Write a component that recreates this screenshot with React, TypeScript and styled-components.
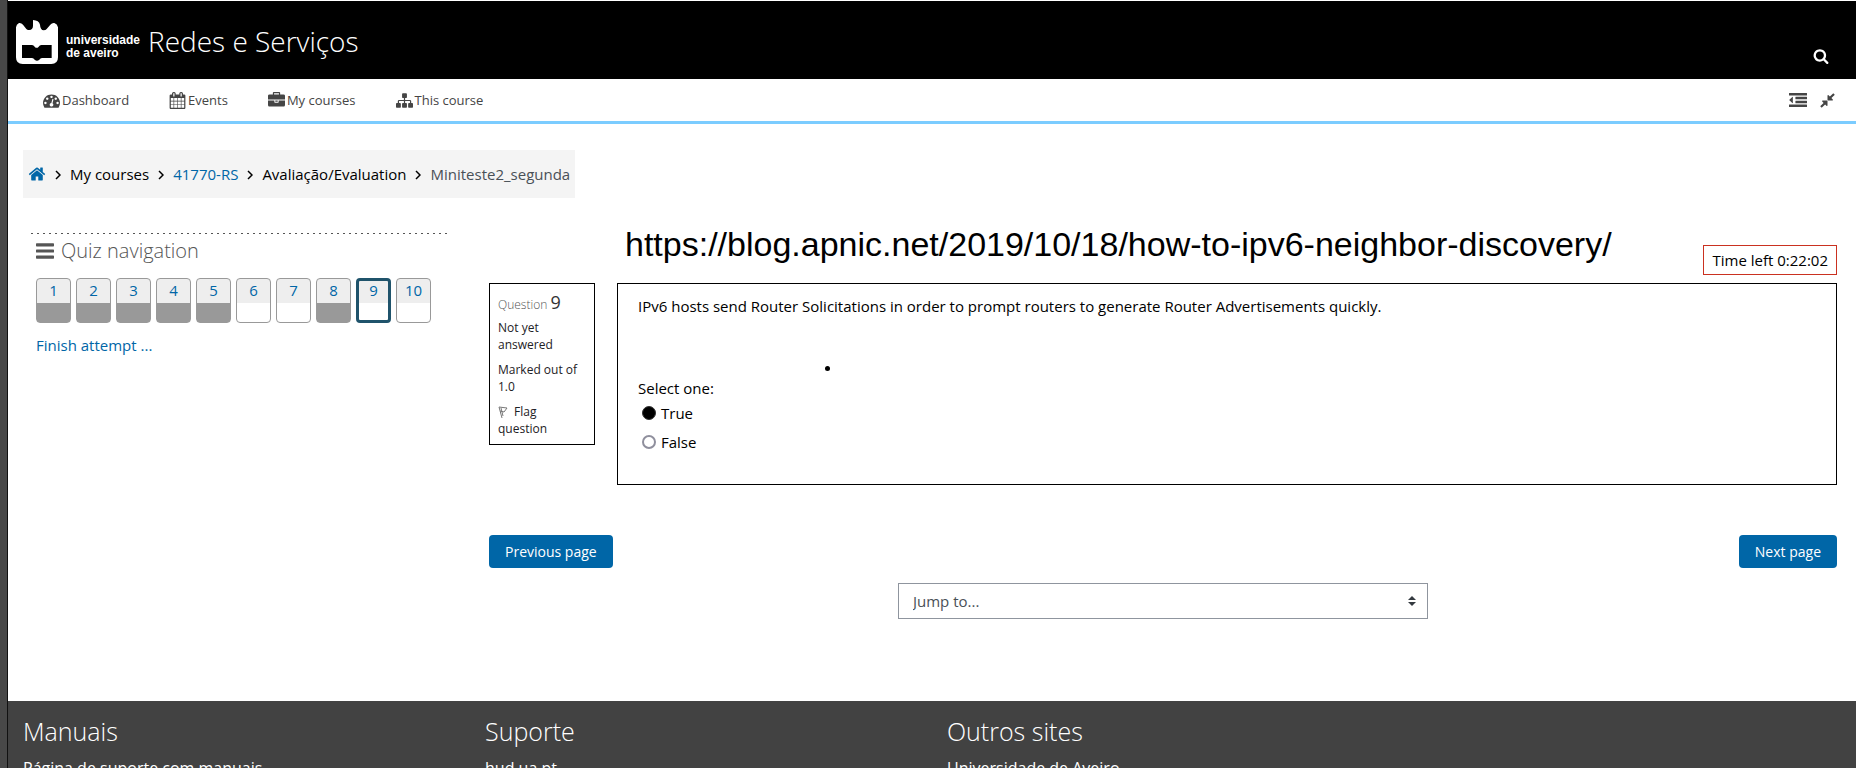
import React, { useState } from "react";
import styled, { createGlobalStyle } from "styled-components";

const GlobalStyle = createGlobalStyle`
  *, *::before, *::after { box-sizing: border-box; }
  html { scrollbar-width: none; }
  body {
    margin: 0;
    background: #fff;
    color: #000;
    font-family: "Open Sans", "Noto Sans", sans-serif;
    font-size: 15px;
    line-height: 22px;
  }
  a { color: #0066a7; text-decoration: none; }
`;

const ICONS = {
  dashboard:
    "M384 1152q0-53-37.5-90.5t-90.5-37.5-90.5 37.5-37.5 90.5 37.5 90.5 90.5 37.5 90.5-37.5 37.5-90.5zm192-448q0-53-37.5-90.5t-90.5-37.5-90.5 37.5-37.5 90.5 37.5 90.5 90.5 37.5 90.5-37.5 37.5-90.5zm428 481l101-382q6-26-7.5-48.5t-38.5-29.5-48 6.5-30 39.5l-101 382q-60 5-107 43.5t-63 98.5q-20 77 20 146t117 89 146-20 89-117q16-60-6-117t-72-91zm660-33q0-53-37.5-90.5t-90.5-37.5-90.5 37.5-37.5 90.5 37.5 90.5 90.5 37.5 90.5-37.5 37.5-90.5zm-640-640q0-53-37.5-90.5t-90.5-37.5-90.5 37.5-37.5 90.5 37.5 90.5 90.5 37.5 90.5-37.5 37.5-90.5zm448 192q0-53-37.5-90.5t-90.5-37.5-90.5 37.5-37.5 90.5 37.5 90.5 90.5 37.5 90.5-37.5 37.5-90.5zm320 448q0 261-141 483-19 29-54 29h-1402q-35 0-54-29-141-221-141-483 0-182 71-348t191-286 286-191 348-71 348 71 286 191 191 286 71 348z",
  calendar:
    "M192 1664h288v-288h-288v288zm352 0h320v-288h-320v288zm-352-352h288v-320h-288v320zm352 0h320v-320h-320v320zm-352-384h288v-288h-288v288zm736 736h320v-288h-320v288zm-384-736h320v-288h-320v288zm768 736h288v-288h-288v288zm-384-352h320v-320h-320v320zm-352-864v-288q0-13-9.5-22.5t-22.5-9.5h-64q-13 0-22.5 9.5t-9.5 22.5v288q0 13 9.5 22.5t22.5 9.5h64q13 0 22.5-9.5t9.5-22.5zm736 864h288v-320h-288v320zm-384-384h320v-288h-320v288zm384 0h288v-288h-288v288zm32-480v-288q0-13-9.5-22.5t-22.5-9.5h-64q-13 0-22.5 9.5t-9.5 22.5v288q0 13 9.5 22.5t22.5 9.5h64q13 0 22.5-9.5t9.5-22.5zm384-64v1280q0 52-38 90t-90 38h-1408q-52 0-90-38t-38-90v-1280q0-52 38-90t90-38h128v-96q0-66 47-113t113-47h64q66 0 113 47t47 113v96h384v-96q0-66 47-113t113-47h64q66 0 113 47t47 113v96h128q52 0 90 38t38 90z",
  briefcase:
    "M640 256h512v-128h-512v128zm1152 640v480q0 66-47 113t-113 47h-1472q-66 0-113-47t-47-113v-480h672v160q0 26 19 45t45 19h320q26 0 45-19t19-45v-160h672zm-768 0v128h-256v-128h256zm768-480v384h-1792v-384q0-66 47-113t113-47h352v-160q0-40 28-68t68-28h576q40 0 68 28t28 68v160h352q66 0 113 47t47 113z",
  sitemap:
    "M1792 1248v320q0 40-28 68t-68 28h-320q-40 0-68-28t-28-68v-320q0-40 28-68t68-28h96v-192h-512v192h96q40 0 68 28t28 68v320q0 40-28 68t-68 28h-320q-40 0-68-28t-28-68v-320q0-40 28-68t68-28h96v-192h-512v192h96q40 0 68 28t28 68v320q0 40-28 68t-68 28h-320q-40 0-68-28t-28-68v-320q0-40 28-68t68-28h96v-192q0-52 38-90t90-38h512v-192h-96q-40 0-68-28t-28-68v-320q0-40 28-68t68-28h320q40 0 68 28t28 68v320q0 40-28 68t-68 28h-96v192h512q52 0 90 38t38 90v192h96q40 0 68 28t28 68z",
  home:
    "M1472 992v480q0 26-19 45t-45 19h-384v-384h-256v384h-384q-26 0-45-19t-19-45v-480q0-1 .5-3t.5-3l575-474 575 474q1 2 1 6zm223-69l-62 74q-8 9-21 11h-3q-13 0-21-7l-692-577-692 577q-12 8-24 7-13-2-21-11l-62-74q-8-10-7-23.5t11-21.5l719-599q32-26 76-26t76 26l244 204v-195q0-14 9-23t23-9h192q14 0 23 9t9 23v408l219 182q10 8 11 21.5t-7 23.5z",
  search:
    "M1216 832q0-185-131.5-316.5t-316.5-131.5-316.5 131.5-131.5 316.5 131.5 316.5 316.5 131.5 316.5-131.5 131.5-316.5zm512 832q0 52-38 90t-90 38q-54 0-90-38l-343-342q-179 124-399 124-143 0-273.5-55.5t-225-150-150-225-55.5-273.5 55.5-273.5 150-225 225-150 273.5-55.5 273.5 55.5 225 150 150 225 55.5 273.5q0 220-124 399l343 343q37 37 37 90z",
  outdent:
    "M384 608v576q0 13-9.5 22.5t-22.5 9.5q-14 0-23-9l-288-288q-9-9-9-23t9-23l288-288q9-9 23-9 13 0 22.5 9.5t9.5 22.5zM32 1344h1728q32 0 32 32v192q0 32-32 32H32q-32 0-32-32v-192q0-32 32-32zM672 960h1088q32 0 32 32v192q0 32-32 32H672q-32 0-32-32V992q0-32 32-32zM672 576h1088q32 0 32 32v192q0 32-32 32H672q-32 0-32-32V608q0-32 32-32zM32 192h1728q32 0 32 32v192q0 32-32 32H32q-32 0-32-32V224q0-32 32-32z",
  compress:
    "M896 960v448q0 26-19 45t-45 19-45-19l-144-144-332 332q-10 10-23 10t-23-10l-114-114q-10-10-10-23t10-23l332-332-144-144q-19-19-19-45t19-45 45-19h448q26 0 45 19t19 45zm755-672q0 13-10 23l-332 332 144 144q19 19 19 45t-19 45-45 19h-448q-26 0-45-19t-19-45v-448q0-26 19-45t45-19 45 19l144 144 332-332q10-10 23-10t23 10l114 114q10 10 10 23z",
  menu:
    "M64 128h1664q64 0 64 64v192q0 64-64 64H64q-64 0-64-64V192q0-64 64-64zM64 736h1664q64 0 64 64v192q0 64-64 64H64q-64 0-64-64V800q0-64 64-64zM64 1344h1664q64 0 64 64v192q0 64-64 64H64q-64 0-64-64v-192q0-64 64-64z",
};

type IconName = keyof typeof ICONS;

const IconSvg = styled.svg`
  display: block;
  flex: none;
  fill: currentColor;
`;

const Icon = ({ name, size }: { name: IconName; size: number }) => (
  <IconSvg viewBox="0 0 1792 1792" width={size} height={size} aria-hidden="true">
    <path d={ICONS[name]} />
  </IconSvg>
);

const Shell = styled.div`
  border-left: 7px solid #484848;
`;

const Page = styled.div`
  border-left: 1px solid #111;
`;

const Header = styled.header`
  display: flex;
  align-items: flex-start;
  height: 79px;
  padding: 19px 27px 0 8px;
  border-top: 1px solid #fff;
  background: #000;
  color: #fff;
`;

const Brand = styled.a`
  display: flex;
  color: #fff;
`;

const BrandName = styled.span`
  padding: 14px 0 0 8px;
  font: bold 12px/13px "Liberation Sans", Arial, sans-serif;
`;

const CourseTitle = styled.h1`
  flex: 1;
  margin: 1px 0 0 8px;
  font-size: 28px;
  line-height: 40px;
  font-weight: 300;
`;

const IconButton = styled.button`
  display: flex;
  padding: 0;
  border: 0;
  background: none;
  color: inherit;
  cursor: pointer;
`;

const SearchButton = styled(IconButton)`
  margin-top: 28px;
`;

const NavBar = styled.nav`
  display: flex;
  align-items: center;
  justify-content: space-between;
  height: 45px;
  padding: 0 20px 0 35px;
  border-bottom: 3px solid #7bccff;
  color: #454545;
`;

const NavLinks = styled.div`
  display: flex;
  gap: 40px;
`;

const NavLink = styled.a`
  display: flex;
  align-items: center;
  gap: 2px;
  color: #454545;
  font-size: 13px;
`;

const NavTools = styled.div`
  display: flex;
  align-items: center;
  gap: 12px;
`;

const Breadcrumb = styled.ol`
  display: flex;
  align-items: center;
  width: fit-content;
  height: 48px;
  margin: 26px 15px 0;
  padding: 0 5px;
  background: #f4f4f4;
  list-style: none;
`;

const Crumb = styled.li<{ $muted?: boolean }>`
  display: flex;
  align-items: center;
  color: ${(p) => (p.$muted ? "#495057" : "#000")};
`;

const Chevron = styled.svg`
  width: 6px;
  height: 10px;
  margin: 1px 9px 0;
  fill: none;
  stroke: #000;
  stroke-width: 1.5;
`;

const Columns = styled.div`
  display: flex;
  padding: 35px 19px 0 23px;
`;

const Sidebar = styled.aside`
  flex: none;
  width: 416px;
  padding: 0 5px;
`;

const DottedRule = styled.div`
  height: 1px;
  margin: 0 -5px;
  background: repeating-linear-gradient(90deg, #555 0 2px, transparent 2px 6px);
`;

const SidebarTitle = styled.h2`
  display: flex;
  align-items: center;
  gap: 7px;
  margin: 4px 0 0;
  color: #555;
  font-size: 20px;
  line-height: 26px;
  font-weight: 300;
`;

const QuestionList = styled.div`
  display: flex;
  gap: 5px;
  margin-top: 14px;
`;

const QuestionLink = styled.a<{ $answered: boolean; $current: boolean }>`
  width: 35px;
  height: 45px;
  border: ${(p) => (p.$current ? "3px solid #1f536b" : "1px solid #999")};
  border-radius: 4px;
  overflow: hidden;
  background: linear-gradient(
    #eee ${(p) => (p.$current ? "22px" : "24px")},
    ${(p) => (p.$answered ? "#999" : "#fff")} 0
  );
  line-height: ${(p) => (p.$current ? "18px" : "22px")};
  text-align: center;
`;

const FinishLink = styled.a`
  display: block;
  margin-top: 11px;
`;

const Main = styled.main`
  flex: 1;
  min-width: 0;
  margin-left: 42px;
`;

const TopRow = styled.div`
  display: flex;
  align-items: flex-start;
  justify-content: space-between;
  height: 50px;
  padding-left: 136px;
`;

const Address = styled.div`
  font: 34px/38px "Liberation Sans", Helvetica, sans-serif;
  margin-top: -8px;
  white-space: nowrap;
`;

const Timer = styled.div`
  margin-top: 12px;
  padding: 3px 8px;
  border: 1px solid #ca3120;
  line-height: 22px;
`;

const QuestionRow = styled.div`
  display: flex;
  align-items: flex-start;
  gap: 22px;
`;

const Info = styled.section`
  flex: none;
  width: 106px;
  padding: 7px 8px;
  border: 1px solid #000;
  color: #1d2125;
  font-size: 12px;
  line-height: 17px;
`;

const QuestionNumber = styled.h3`
  margin: 0 0 3px;
  color: #555;
  font-size: 12px;
  line-height: 22px;
  font-weight: 300;
`;

const Digit = styled.span`
  color: #333;
  font-size: 18px;
  font-weight: 400;
`;

const InfoLine = styled.p`
  margin: 0 0 8px;
`;

const FlagButton = styled.button`
  padding: 0;
  border: 0;
  background: none;
  color: inherit;
  font: inherit;
  text-align: left;
`;

const FlagSvg = styled.svg`
  width: 10px;
  height: 12px;
  margin-right: 6px;
  vertical-align: -2px;
  fill: none;
  stroke: #777;
`;

const Content = styled.section`
  position: relative;
  flex: 1;
  height: 202px;
  padding: 11px 20px;
  border: 1px solid #000;
`;

const Prompt = styled.p`
  margin: 0;
`;

const PenDot = styled.span`
  position: absolute;
  left: 207px;
  top: 82px;
  width: 5px;
  height: 5px;
  border-radius: 50%;
  background: #000;
`;

const Answers = styled.fieldset`
  display: flex;
  flex-direction: column;
  margin: 60px 0 0;
  padding: 0;
  border: 0;
`;

const Legend = styled.legend`
  padding: 0;
`;

const Option = styled.label`
  display: flex;
  align-items: center;
  gap: 5px;
  height: 22px;
  margin: 3px 0 4px 4px;
`;

const Radio = styled.input`
  appearance: none;
  width: 14px;
  height: 14px;
  margin: 0;
  border: 2px solid #8f8f9d;
  border-radius: 50%;
  background: #fff;

  &:checked {
    border: 1px solid #333;
    background: #000;
  }
`;

const Pager = styled.div`
  display: flex;
  justify-content: space-between;
  margin-top: 50px;
`;

const PageButton = styled.button`
  height: 33px;
  padding: 0 16px;
  border: 0;
  border-radius: 4px;
  background: #0066a7;
  color: #fff;
  font: 14px/20px "Open Sans", sans-serif;
`;

const JumpSelect = styled.select`
  display: block;
  appearance: none;
  width: 530px;
  max-width: 100%;
  height: 36px;
  margin: 15px auto 0;
  padding: 0 14px;
  border: 1px solid #8f959e;
  border-radius: 0;
  background: url("data:image/svg+xml,%3Csvg xmlns='http://www.w3.org/2000/svg' viewBox='0 0 4 5'%3E%3Cpath fill='%23343a40' d='M2 0L0 2h4zm0 5L0 3h4z'/%3E%3C/svg%3E")
    no-repeat right 11px center / 8px 10px;
  color: #495057;
  font: 15px/22px "Open Sans", sans-serif;
`;

const Footer = styled.footer`
  display: grid;
  grid-template-columns: repeat(4, 1fr);
  margin-top: 82px;
  padding: 12px 0 16px;
  background: #424242;
  color: #fff;
`;

const FooterColumn = styled.section`
  padding: 0 15px;
`;

const FooterTitle = styled.h2`
  margin: 0 0 8px;
  font-size: 25px;
  line-height: 36px;
  font-weight: 300;
`;

const FooterLink = styled.a`
  color: #fff;
  font-size: 16px;
`;

const NAV: { icon: IconName; label: string }[] = [
  { icon: "dashboard", label: "Dashboard" },
  { icon: "calendar", label: "Events" },
  { icon: "briefcase", label: "My courses" },
  { icon: "sitemap", label: "This course" },
];

const ANSWERED = [1, 2, 3, 4, 5, 8];

const FOOTER = [
  { title: "Manuais", link: "Página de suporte com manuais" },
  { title: "Suporte", link: "hud.ua.pt" },
  { title: "Outros sites", link: "Universidade de Aveiro" },
];

const Separator = () => (
  <Chevron viewBox="0 0 6 10" aria-hidden="true">
    <path d="M1 1l4 4-4 4" />
  </Chevron>
);

const Logo = () => (
  <svg width="42" height="44" viewBox="0 0 126 132" aria-hidden="true">
    <path
      fill="#fff"
      d="M0 22Q1 13 9 9Q16 8 21 14L31 27Q34 31 40 30Q51 29 51 17V0Q69 1 72 14Q73 30 83 31Q89 31 92 27L103 14Q108 8 115 9Q124 12 126 22V112Q126 132 106 132H20Q0 132 0 112Z"
    />
    <path d="M18 75H48Q53 75 56 80Q62 87 68 80Q71 75 76 75H107V114H78Q73 114 70 119Q63 125 56 119Q53 114 48 114H18Z" />
  </svg>
);

export default function App() {
  const [answer, setAnswer] = useState("True");

  return (
    <Shell>
      <GlobalStyle />
      <Page>
        <Header>
          <Brand href="#" aria-label="universidade de aveiro">
            <Logo />
            <BrandName>
              universidade
              <br />
              de aveiro
            </BrandName>
          </Brand>
          <CourseTitle>Redes e Serviços</CourseTitle>
          <SearchButton aria-label="Search">
            <Icon name="search" size={16} />
          </SearchButton>
        </Header>
        <NavBar>
          <NavLinks>
            {NAV.map((item) => (
              <NavLink href="#" key={item.label}>
                <Icon name={item.icon} size={17} />
                {item.label}
              </NavLink>
            ))}
          </NavLinks>
          <NavTools>
            <IconButton aria-label="Hide blocks">
              <Icon name="outdent" size={18} />
            </IconButton>
            <IconButton aria-label="Standard view">
              <Icon name="compress" size={17} />
            </IconButton>
          </NavTools>
        </NavBar>
        <Breadcrumb>
          <Crumb>
            <a href="#" aria-label="Home">
              <Icon name="home" size={18} />
            </a>
          </Crumb>
          <Crumb><Separator />My courses</Crumb>
          <Crumb><Separator /><a href="#">41770-RS</a></Crumb>
          <Crumb><Separator />Avaliação/Evaluation</Crumb>
          <Crumb $muted><Separator />Miniteste2_segunda</Crumb>
        </Breadcrumb>
        <Columns>
          <Sidebar>
            <DottedRule />
            <SidebarTitle>
              <Icon name="menu" size={18} />
              Quiz navigation
            </SidebarTitle>
            <QuestionList>
              {Array.from({ length: 10 }, (_, i) => i + 1).map((n) => (
                <QuestionLink
                  href="#"
                  key={n}
                  $answered={ANSWERED.includes(n)}
                  $current={n === 9}
                >
                  {n}
                </QuestionLink>
              ))}
            </QuestionList>
            <FinishLink href="#">Finish attempt ...</FinishLink>
          </Sidebar>
          <Main>
            <TopRow>
              <Address>https://blog.apnic.net/2019/10/18/how-to-ipv6-neighbor-discovery/</Address>
              <Timer>Time left 0:22:02</Timer>
            </TopRow>
            <QuestionRow>
              <Info>
                <QuestionNumber>
                  Question <Digit>9</Digit>
                </QuestionNumber>
                <InfoLine>Not yet answered</InfoLine>
                <InfoLine>Marked out of 1.0</InfoLine>
                <FlagButton>
                  <FlagSvg viewBox="0 0 10 12" aria-hidden="true">
                    <path d="M1 1l3 11M1 1l8 1-3 4-4-1M3 2l2 8" />
                  </FlagSvg>
                  Flag question
                </FlagButton>
              </Info>
              <Content>
                <Prompt>
                  IPv6 hosts send Router Solicitations in order to prompt routers to generate Router
                  Advertisements quickly.
                </Prompt>
                <PenDot />
                <Answers>
                  <Legend>Select one:</Legend>
                  {["True", "False"].map((value) => (
                    <Option key={value}>
                      <Radio
                        type="radio"
                        name="answer"
                        value={value}
                        checked={answer === value}
                        onChange={() => setAnswer(value)}
                      />
                      {value}
                    </Option>
                  ))}
                </Answers>
              </Content>
            </QuestionRow>
            <Pager>
              <PageButton>Previous page</PageButton>
              <PageButton>Next page</PageButton>
            </Pager>
            <JumpSelect aria-label="Jump to">
              <option>Jump to...</option>
            </JumpSelect>
          </Main>
        </Columns>
        <Footer>
          {FOOTER.map((column) => (
            <FooterColumn key={column.title}>
              <FooterTitle>{column.title}</FooterTitle>
              <FooterLink href="#">{column.link}</FooterLink>
            </FooterColumn>
          ))}
        </Footer>
      </Page>
    </Shell>
  );
}
